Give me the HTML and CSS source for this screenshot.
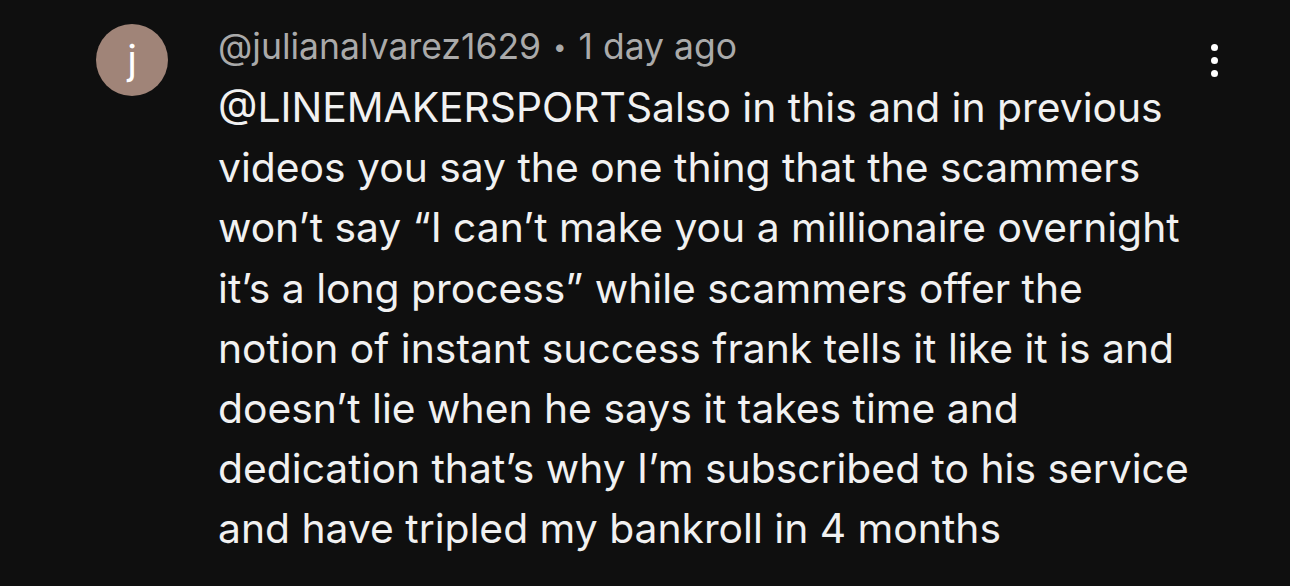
FILE: index.html
```html
<!DOCTYPE html>
<html>
<head>
<meta charset="utf-8">
<link rel="stylesheet" href="styles.css">
</head>
<body>
<div class="comment">
  <div class="avatar">j</div>
  <div class="body">
    <div class="meta">@julianalvarez1629 <span class="dot">•</span> 1 day ago</div>
    <div class="text">@LINEMAKERSPORTSalso in this and in previous<br>videos you say the one thing that the scammers<br>won’t say “I can’t make you a millionaire overnight<br>it’s a long process” while scammers offer the<br>notion of instant success frank tells it like it is and<br>doesn’t lie when he says it takes time and<br>dedication that’s why I’m subscribed to his service<br>and have tripled my bankroll in 4 months</div>
  </div>
  <div class="menu"><span></span><span></span><span></span></div>
</div>
</body>
</html>
```
FILE: styles.css
```css
html, body {
  margin: 0;
  background: #0f0f0f;
  width: 1290px;
  height: 586px;
  overflow: hidden;
}
.comment {
  display: flex;
  align-items: flex-start;
  padding: 24px 0 0 96px;
  font-family: Inter, "Liberation Sans", sans-serif;
}
.avatar {
  width: 72px;
  height: 72px;
  border-radius: 50%;
  background: #a08478;
  color: #fff;
  font-size: 40px;
  font-weight: 400;
  display: flex;
  align-items: center;
  justify-content: center;
  line-height: 1;
  flex-shrink: 0;
}
.body {
  margin-left: 50px;
  width: 960px;
}
.meta {
  color: #aaaaaa;
  font-size: 35.5px;
  line-height: 46px;
}
.meta .dot {
  font-size: 24px;
  margin: 0 2px;
  vertical-align: 4px;
}
.text {
  color: #f1f1f1;
  font-size: 40.8px;
  line-height: 60.2px;
  white-space: nowrap;
  margin-top: 7px;
}
.menu {
  margin-left: 33px;
  margin-top: 20px;
  display: flex;
  flex-direction: column;
  gap: 6px;
}
.menu span {
  width: 7px;
  height: 7px;
  border-radius: 50%;
  background: #fff;
}
```
